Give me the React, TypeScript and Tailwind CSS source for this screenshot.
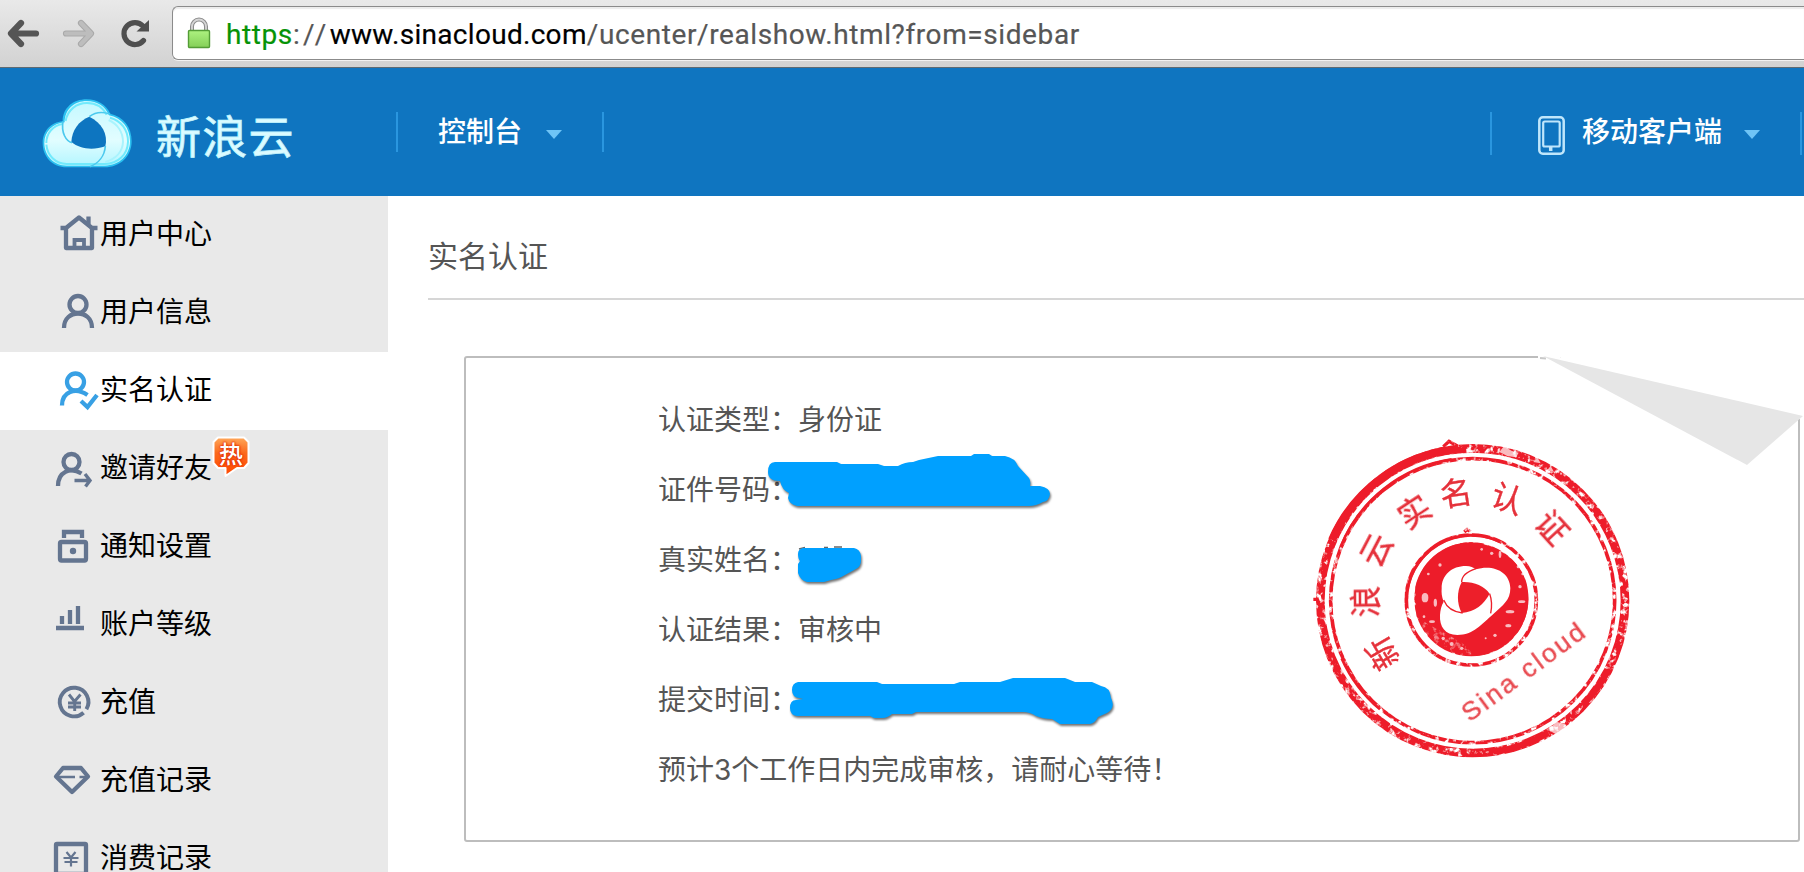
import type { ReactNode } from "react";

const SLATE = "#647590";

type IconProps = { children: ReactNode };

function Icon({ children }: IconProps) {
  return (
    <svg width="100" height="78" viewBox="0 0 100 78" fill="none" stroke={SLATE} strokeWidth="4.300" className="block shrink-0">
      {children}
    </svg>
  );
}

const homeIcon = (
  <Icon>
    <path d="M60.500 32 H66 L79 21.500 L92 32 H97.500" strokeLinejoin="round" />
    <path d="M66 31 V52 H92 V31" strokeLinejoin="round" />
    <path d="M74.500 51 V44 H84 V51" strokeWidth="3.800" />
    <path d="M88.500 20.500 V28" />
  </Icon>
);

const userIcon = (
  <Icon>
    <circle cx="78" cy="30.500" r="8.500" />
    <path d="M64 54 C64 44 71 39.500 78 39.500 C85 39.500 92 44 92 54" />
  </Icon>
);

const verifiedIcon = (
  <Icon>
    <g stroke="#38a0e4">
      <circle cx="75.500" cy="30" r="8.500" />
      <path d="M62 53.500 C62 40 75 34.500 87.500 43" />
      <path d="M81 49 L87.500 55 L97 43" />
    </g>
  </Icon>
);

const inviteIcon = (
  <Icon>
    <circle cx="71.500" cy="32" r="8" />
    <path d="M58 56 C58 42 70 36.500 81.500 43.500" />
    <path d="M74.500 50.500 H89.500 M85 44 L90 50.500 L85.500 56.500" strokeWidth="3.400" />
  </Icon>
);

const lockIcon = (
  <Icon>
    <rect x="60" y="34" width="26" height="18.500" rx="1.500" />
    <path d="M64 30 V24 H82 V30" />
    <circle cx="73" cy="43" r="3.200" fill={SLATE} stroke="none" />
  </Icon>
);

const levelIcon = (
  <Icon>
    <path d="M56 42 H84 M62 30 V38 M70 24 V38 M78 20 V38" />
  </Icon>
);

const rechargeIcon = (
  <Icon>
    <path d="M86.400 45.300 A14.300 14.300 0 1 0 83.600 48.700" strokeWidth="3.900" />
    <path d="M69 30.500 L74.500 37.500 L80.500 30.500 M74.700 37 V47 M68 39 H81 M68 43 H81" strokeWidth="2.900" />
  </Icon>
);

const diamondIcon = (
  <Icon>
    <path d="M63 26 H81 L88 34.500 L72 50 L56 34.500 Z" strokeLinejoin="round" />
    <path d="M58 35 H75 M79.500 35 H87" strokeWidth="2.400" />
  </Icon>
);

const billIcon = (
  <Icon>
    <rect x="56" y="24" width="30" height="30" rx="1" />
    <path d="M66.500 32 L71 37.500 L75.500 32 M71 37.500 V46.500 M63.500 38 H78.500 M64.500 42 H77.500" strokeWidth="2.200" />
  </Icon>
);

function HotBadge() {
  return (
    <span className="absolute left-[212px] top-[6px] h-[42px] w-[38px]">
      <svg width="38" height="42" viewBox="0 0 38 42" className="absolute inset-0">
        <defs>
          <linearGradient id="hot" x1="0" y1="0" x2="0" y2="1">
            <stop offset="0" stopColor="#ffa85a" />
            <stop offset="0.4" stopColor="#fb6a1e" />
            <stop offset="1" stopColor="#ff4800" />
          </linearGradient>
        </defs>
        <path
          d="M6 1.500 H32 L36.500 6 V27 L32 32 H25 L13.500 40 V32 H6 L1.500 27 V6 Z"
          fill="url(#hot)"
          stroke="#fff"
          strokeWidth="2"
          strokeLinejoin="round"
        />
      </svg>
      <span className="absolute left-[7px] top-[4px] text-[24px] font-medium leading-[25px] text-white [text-shadow:0_0_3px_#e02800,0_0_2px_#e02800,0_0_1px_#e02800]">
        热
      </span>
    </span>
  );
}

const menu: { label: string; icon: ReactNode; active?: boolean; hot?: boolean }[] = [
  { label: "用户中心", icon: homeIcon },
  { label: "用户信息", icon: userIcon },
  { label: "实名认证", icon: verifiedIcon, active: true },
  { label: "邀请好友", icon: inviteIcon, hot: true },
  { label: "通知设置", icon: lockIcon },
  { label: "账户等级", icon: levelIcon },
  { label: "充值", icon: rechargeIcon },
  { label: "充值记录", icon: diamondIcon },
  { label: "消费记录", icon: billIcon },
];

function BrowserBar() {
  return (
    <div className="flex h-[68px] shrink-0 items-start border-b border-[#5f6a72] bg-linear-to-b from-[#e9e9e9] to-[#d2d2d2]">
      <svg width="172" height="66" viewBox="0 0 172 66" fill="none" className="block shrink-0">
        <g strokeLinecap="round" strokeLinejoin="round" strokeWidth="6.200">
          <path d="M36 33.500 H12 M21 23 L11 33.500 L21 44" stroke="#555" />
          <path d="M66 33.500 H90 M81 23 L91 33.500 L81 44" stroke="#a9a9a9" />
          <path d="M66 33.500 H90 M81 23 L91 33.500 L81 44" stroke="#bdbdbd" strokeWidth="4.200" />
        </g>
        <path d="M143.500 40.500 A11 11 0 1 1 143 26" stroke="#4f4f4f" strokeWidth="5.200" strokeLinecap="round" />
        <path d="M149 20 V31.500 H136.500 Z" fill="#4f4f4f" />
      </svg>
      <div className="mt-[6px] flex h-[54px] grow items-center rounded-l-[6px] border-y-[1.500px] border-l-[1.500px] border-[#8b8b8b] bg-white shadow-[0_1px_0_#f2f2f2,inset_0_2px_1px_#ececec]">
        <svg width="24" height="32" viewBox="0 0 24 32" className="ml-[14px] block shrink-0">
          <defs>
            <linearGradient id="lock" x1="0" y1="0" x2="0" y2="1">
              <stop offset="0" stopColor="#adf280" />
              <stop offset="1" stopColor="#84cf58" />
            </linearGradient>
          </defs>
          <path d="M5 15 V9.500 A7 7 0 0 1 19 9.500 V15" fill="none" stroke="#8b8b8b" strokeWidth="4" />
          <path d="M5 15 V9.500 A7 7 0 0 1 19 9.500 V15" fill="none" stroke="#d6d6d6" strokeWidth="1.800" />
          <rect x="1.500" y="13.500" width="21" height="17" rx="1" fill="url(#lock)" stroke="#539c36" strokeWidth="1.400" />
        </svg>
        <p className="ml-[15px] mt-[4px] whitespace-nowrap font-['Roboto',sans-serif] text-[28px] tracking-[0.6px] text-[#565656] [-webkit-text-stroke:0.2px]">
          <span className="text-[#069306]">https</span>
          <span className="tracking-[3.300px]">://</span>
          <span className="tracking-[0.3px] text-black">www.sinacloud.com</span>
          /ucenter/realshow.html?from=sidebar
        </p>
      </div>
    </div>
  );
}

function CloudLogo() {
  return (
    <svg width="95" height="75" viewBox="30 30 285 225" className="block shrink-0">
      <defs>
        <linearGradient id="ice" x1="0" y1="0" x2="0" y2="1">
          <stop offset="0" stopColor="#c4f8ff" />
          <stop offset="0.6" stopColor="#e2fdff" />
          <stop offset="1" stopColor="#b4f6ff" />
        </linearGradient>
        <filter id="soft" x="-10%" y="-10%" width="120%" height="120%">
          <feGaussianBlur stdDeviation="1.800" />
        </filter>
      </defs>
      <g filter="url(#soft)">
        <path
          d="M98 106 C98 65 130 40 170 40 C203 40 229 57 241 83 C280 92 305 122 305 166 C305 212 270 244 225 244 H110 C68 244 38 213 38 171 C38 135 64 108 98 106 Z"
          fill="#2cc0f0"
        />
        <path
          d="M104 109 C104 70 133 45 170 45 C202 45 226 61 237 88 C276 96 300 126 300 166 C300 209 266 239 225 239 H110 C72 239 43 210 43 171 C43 137 68 112 104 109 Z"
          fill="url(#ice)"
        />
        <path
          d="M49 171 C49 140 70 119 97 114 M107 105 C112 72 140 51 171 51 C198 51 219 65 230 86 M240 95 C274 104 294 132 294 167 C293 206 264 233 225 234 H110 C76 233 52 208 49 176"
          fill="none"
          stroke="#72eafc"
          strokeWidth="6"
        />
        <path d="M236 102 C262 114 279 138 279 168 C278 196 258 218 226 228" fill="none" stroke="#a9f3fd" strokeWidth="6" />
        <path d="M178 92 C215 110 235 145 226 181 C190 193 150 190 124 168 C126 133 145 105 178 92 Z" fill="#0f75c0" />
        <path d="M99 106 C93 140 108 166 126 170" fill="none" stroke="#4cc9ee" strokeWidth="5" />
        <path d="M240 84 C213 75 193 80 178 92" fill="none" stroke="#4cc9ee" strokeWidth="5" />
        <path d="M226 180 C224 210 205 232 180 242" fill="none" stroke="#4cc9ee" strokeWidth="5" />
      </g>
    </svg>
  );
}

function Caret() {
  return (
    <svg width="16" height="9" viewBox="0 0 16 9" className="block shrink-0">
      <path d="M0 0 H16 L8 9 Z" fill="#6fc4f6" />
    </svg>
  );
}

function SiteHeader() {
  return (
    <header className="flex h-[128px] shrink-0 items-start bg-[#0f75c0] text-[28px] font-medium leading-[40px] text-white">
      <div className="flex w-[396px] items-center pl-[40px] pt-[28px]">
        <CloudLogo />
        <span className="ml-[21px] mt-[2px] text-[45px] font-normal leading-[56px] tracking-[1.2px] text-[#dcfbff] [-webkit-text-stroke:0.8px_#c4f6ff]">
          新浪云
        </span>
      </div>
      <div className="mt-[44px] flex h-[40px] w-[208px] items-center border-x-2 border-[#2a96df] pl-[40px]">
        <span className="-mt-[4px]">控制台</span>
        <span className="ml-[24px] mt-[5px]">
          <Caret />
        </span>
      </div>
      <div className="ml-auto mr-[2px] mt-[44px] flex h-[43px] w-[312px] items-center border-x-2 border-[#2a96df] pl-[46px]">
        <svg width="27" height="39" viewBox="0 0 27 39" fill="none" stroke="#bfe6fb" className="mt-[3px] block shrink-0">
          <rect x="1.300" y="1.300" width="24.400" height="36.400" rx="3.500" strokeWidth="2.500" />
          <rect x="5.200" y="5.500" width="16.500" height="25" rx="1.500" strokeWidth="2.200" />
          <path d="M12.700 30 V35" strokeWidth="3.500" />
        </svg>
        <span className="-mt-[8px] ml-[17px]">移动客户端</span>
        <span className="ml-[22px] mt-[2px]">
          <Caret />
        </span>
      </div>
    </header>
  );
}

function Sidebar() {
  return (
    <nav className="w-[388px] shrink-0 overflow-hidden bg-[#e9e9e9]">
      {menu.map((item) => (
        <div key={item.label} className={item.active ? "relative flex h-[78px] items-center bg-white" : "relative flex h-[78px] items-center"}>
          {item.icon}
          <span className="-mt-[7px] text-[28px] leading-[40px] text-black">{item.label}</span>
          {item.hot && <HotBadge />}
        </div>
      ))}
    </nav>
  );
}

const sealChars: [string, number, number][] = [
  ["新", 247, 700],
  ["浪", 197, 545],
  ["云", 228, 390],
  ["实", 343, 276],
  ["名", 468, 220],
  ["认", 622, 236],
  ["证", 757, 323],
];

function Seal() {
  return (
    <svg width="350" height="350" viewBox="0 0 1050 1050" className="absolute left-[834px] top-[62px]">
      <defs>
        <filter id="worn" x="0" y="0" width="1050" height="1050" filterUnits="userSpaceOnUse">
          <feTurbulence type="fractalNoise" baseFrequency="0.06" numOctaves="3" seed="7" result="noise" />
          <feColorMatrix in="noise" type="matrix" values="0 0 0 0 0  0 0 0 0 0  0 0 0 0 0  0 0 0 -4.500 3.350" result="holes" />
          <feComposite in="SourceGraphic" in2="holes" operator="in" />
          <feGaussianBlur stdDeviation="2" />
        </filter>
        <filter id="solid">
          <feGaussianBlur stdDeviation="1.500" />
        </filter>
      </defs>
      <g fill="none" stroke="#ed1f2a">
        <g filter="url(#worn)">
          <circle cx="518" cy="542" r="457" strokeWidth="26" />
          <circle cx="518" cy="542" r="426" strokeWidth="11" />
          <circle cx="514" cy="540" r="195" strokeWidth="11" />
          <path d="M430 80 L447 64 L472 78 M40 538 H60 M493 336 L502 328 L511 336" strokeWidth="10" />
        </g>
        <g filter="url(#solid)">
          <path d="M96 360 A456 456 0 0 1 470 88" strokeWidth="24" />
          <path d="M590 995 A456 456 0 0 0 745 938 M850 852 A456 456 0 0 0 925 750" strokeWidth="20" />
          <path d="M122 380 A428 428 0 0 1 455 118 M125 715 A428 428 0 0 0 240 868" strokeWidth="8" />
          <path d="M320 535 A195 195 0 0 1 600 365" strokeWidth="9" />
        </g>
      </g>
      <g fill="#fff" opacity="0.7" filter="url(#solid)">
        <path d="M598 96 L612 78 L634 92 L656 98 L648 112 L622 108 Z" />
        <path d="M700 126 L712 112 L722 130 Z M742 150 L752 138 L762 156 Z" />
        <path d="M745 930 L770 905 L800 915 L772 945 Z" />
      </g>
      <g filter="url(#worn)">
        <circle cx="514" cy="538" r="171" fill="#ed1f2a" />
      </g>
      <circle cx="514" cy="538" r="169" fill="#ed1f2a" opacity="0.55" />
      <path
        d="M346 500 A171 171 0 0 1 530 368 C600 380 684 430 685 530 A171 171 0 0 1 520 708 C500 660 420 640 350 590 Z"
        fill="#ed1f2a"
        filter="url(#solid)"
      />
      <g fill="#fff" opacity="0.7" filter="url(#solid)">
        <ellipse cx="375" cy="533" rx="10" ry="14" />
        <ellipse cx="406" cy="548" rx="5" ry="12" />
        <ellipse cx="600" cy="403" rx="4" ry="11" />
        <circle cx="575" cy="400" r="5" />
        <circle cx="545" cy="388" r="4" />
        <circle cx="385" cy="462" r="4" />
        <circle cx="420" cy="435" r="5" />
        <circle cx="660" cy="500" r="5" />
        <circle cx="655" cy="440" r="5" />
        <circle cx="668" cy="462" r="4" />
        <ellipse cx="665" cy="545" rx="11" ry="4" />
        <ellipse cx="630" cy="575" rx="13" ry="5" />
        <ellipse cx="625" cy="617" rx="9" ry="5" />
        <circle cx="585" cy="646" r="5" />
        <circle cx="557" cy="655" r="3" />
        <ellipse cx="396" cy="605" rx="9" ry="4" />
        <circle cx="372" cy="590" r="4" />
        <circle cx="430" cy="655" r="5" />
        <circle cx="455" cy="672" r="6" />
        <circle cx="485" cy="685" r="5" />
      </g>
      <path
        d="M425 505 C425 465 455 438 498 438 C512 438 520 442 527 448 C580 432 630 455 631 505 C631 540 610 555 580 582 C545 612 520 645 472 645 C435 645 418 620 420 585 C421 570 424 556 431 545 C425 530 424 518 425 505 Z"
        fill="#fff"
      />
      <g fill="#ed1f2a">
        <path d="M485 486 C520 484 552 497 569 521 C552 553 525 575 485 579 C470 550 470 515 485 486 Z" />
        <path
          d="M528 446 C500 455 485 470 485 486 M431 540 C440 562 460 576 488 579 M569 521 C576 540 576 560 572 580"
          fill="none"
          stroke="#ed1f2a"
          strokeWidth="4"
        />
      </g>
      <g
        fill="#e5303a"
        stroke="#e5303a"
        strokeWidth="1"
        fontFamily="'Noto Sans CJK SC', sans-serif"
        fontSize="96"
        textAnchor="middle"
        filter="url(#solid)"
      >
        {sealChars.map(([ch, x, y]) => {
          const turn = (Math.atan2(x - 518, 542 - y) * 180) / Math.PI;
          return (
            <text key={ch} transform={`translate(${x} ${y}) rotate(${turn})`} y="35">
              {ch}
            </text>
          );
        })}
      </g>
      <text
        transform="translate(509 908) rotate(-36.500)"
        textLength="438"
        fill="#e84a50"
        stroke="#e84a50"
        strokeWidth="1"
        fontFamily="'Liberation Sans', sans-serif"
        fontSize="79"
        filter="url(#solid)"
      >
        Sina cloud
      </text>
    </svg>
  );
}

function Scribbles() {
  return (
    <svg width="1340" height="490" viewBox="464 356 1340 490" className="absolute left-[-2px] top-[-2px] [&_path]:[stroke-linejoin:round]">
      <path d="M799 549 L805 547.500 M824 547.500 H828 M834 547 H842" stroke="#666" strokeWidth="1.600" />
      <g fill="#00a0ff" className="drop-shadow-[1px_2px_1px_rgba(0,0,0,0.55)]">
        <path d="M768 472 Q768 462 775 462 H837 L841 464 H878 L884 466 H898 Q905 462 913 462 L919 460 L938 456 H971 L974 454 H989 L992 456 H1005 Q1015 458 1018 466 L1029 478 Q1031 481 1030 486 H1040 Q1050 488 1050 494 Q1049 501 1043 502 Q1036 506 1029 506 H797 Q789 504 788 498 L789 493 Q782 490 780 481 Q768 481 768 472 Z" />
        <path d="M798 554 Q798 549 803 548 H854 Q860 549 861 556 V561 Q861 566 856 569 L845 575 Q839 579 831 580 L824 582 H807 Q800 580 798 573 V564 L800 561 Q798 559 798 554 Z" />
        <path d="M792 690 Q792 683 798 682 H877 L882 684 H954 L960 682 H1000 L1013 678 H1065 L1075 682 H1092 L1101 686 Q1110 687 1111 698 Q1116 708 1107 713 L1098 717 Q1095 723 1090 724 H1060 L1052 719 Q1043 719 1036 716 Q1030 712 1023 712 H916 L912 714 H892 Q887 718 883 718 H874 L870 716 H797 Q790 715 790 708 Q790 700 796 700 L803 699 L799 698 Q792 697 792 690 Z" />
      </g>
      <path d="M1538 352 H1804 V419 H1797 Z" fill="#fff" />
      <path d="M1538 352 H1560 V362 H1538 Z" fill="#fff" />
      <path d="M1540 358 L1546 358.500" stroke="#c9c9c9" strokeWidth="2" />
      <path d="M1543 356 L1803 416 L1747 465 Z" fill="#e6e6e6" />
    </svg>
  );
}

const rows: ReactNode[] = [
  "认证类型：身份证",
  "证件号码：",
  "真实姓名：",
  "认证结果：审核中",
  "提交时间：",
  <>
    预计<span className="font-['Inter',sans-serif]">3</span>个工作日内完成审核，请耐心等待！
  </>,
];

export default function App() {
  return (
    <div className="flex h-[872px] w-[1804px] flex-col overflow-hidden bg-white font-['Noto_Sans_CJK_SC',sans-serif]">
      <BrowserBar />
      <SiteHeader />
      <div className="flex min-h-0 grow">
        <Sidebar />
        <main className="min-w-0 grow pl-[40px] text-[#555]">
          <h1 className="h-[104px] border-b-2 border-[#d6d6d6] pt-[36px] text-[30px] leading-[44px]">实名认证</h1>
          <section className="relative ml-[36px] mt-[56px] h-[486px] w-[1336px] rounded-[3px] border-2 border-[#bdbdbd] pl-[192px] pt-[25px]">
            {rows.map((row, i) => (
              <p key={i} className="h-[70px] text-[28px] leading-[70px]">
                {row}
              </p>
            ))}
            <Seal />
            <Scribbles />
          </section>
        </main>
      </div>
    </div>
  );
}
